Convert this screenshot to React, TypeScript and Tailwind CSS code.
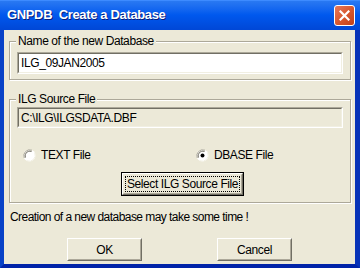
// Windows XP style "Create a Database" dialog

const font = "font-['Liberation_Sans',Arial,sans-serif]";

function Sunken({ children, className = "" }: { children: React.ReactNode; className?: string }) {
  // classic 3D sunken edit border
  return (
    <div className={`border border-t-[#ACA899] border-l-[#ACA899] border-b-white border-r-white ${className}`}>
      <div className="h-full border border-t-[#716F64] border-l-[#716F64] border-b-[#F1EFE2] border-r-[#F1EFE2] flex items-center">
        {children}
      </div>
    </div>
  );
}

function Button({ label, focused = false, className = "" }: { label: string; focused?: boolean; className?: string }) {
  return (
    <div className={`${focused ? "border border-black" : ""} ${className}`}>
      <div className="h-full border border-t-white border-l-white border-b-[#716F64] border-r-[#716F64] bg-[#ECE9D8]">
        <div className="h-full border border-t-[#ECE9D8] border-l-[#ECE9D8] border-b-[#ACA899] border-r-[#ACA899] flex items-center justify-center p-[2px]">
          <span
            className={`whitespace-nowrap px-[1px] leading-[14px] text-[12px] tracking-[-0.4px] text-black ${focused ? "outline outline-1 outline-dotted outline-black" : ""}`}
          >
            {label}
          </span>
        </div>
      </div>
    </div>
  );
}

function Radio({ checked, label }: { checked: boolean; label: string }) {
  return (
    <div className="flex items-center gap-[5px]">
      <svg width="13" height="13" viewBox="0 0 13 13">
        <circle cx="6.5" cy="6.5" r="6" fill="#fff" />
        <path d="M1.2 9 A6 6 0 0 1 9 1.2" fill="none" stroke="#ACA899" strokeWidth="1" />
        <path d="M2.4 8.6 A4.8 4.8 0 0 1 8.6 2.4" fill="none" stroke="#716F64" strokeWidth="1" />
        <path d="M11.8 4 A6 6 0 0 1 4 11.8" fill="none" stroke="#F1EFE2" strokeWidth="1" />
        {checked && <circle cx="6.5" cy="6.5" r="2" fill="#000" />}
      </svg>
      <span className="text-[12px] tracking-[-0.4px] text-black leading-[14px]">{label}</span>
    </div>
  );
}

function Group({ label, children, className = "" }: { label: string; children: React.ReactNode; className?: string }) {
  return (
    <div
      className={`relative border border-[#ACA899] shadow-[inset_1px_1px_0_#fff,1px_1px_0_#fff] ${className}`}
    >
      <span className="absolute left-[6px] top-[-8px] bg-[#ECE9D8] px-[2px] text-[12px] tracking-[-0.4px] leading-[14px] text-black">
        {label}
      </span>
      {children}
    </div>
  );
}

export default function App() {
  return (
    <div className={`w-[360px] h-[268px] flex flex-col ${font}`}>
      {/* Title bar */}
      <div className="h-[30px] flex items-center justify-between pl-[7px] pr-[5px] bg-gradient-to-b from-[#2C7BF2] via-[#0058EE] to-[#0047D6] shadow-[inset_0_1px_0_#3D8BFF]">
        <span className="text-white font-bold text-[13px] tracking-[-0.35px] [text-shadow:1px_1px_0_#0A1E7A]">
          GNPDB&nbsp; Create a Database
        </span>
        <div className="w-[21px] h-[21px] rounded-[3px] border border-white bg-gradient-to-br from-[#E6785A] via-[#D8582F] to-[#C0401A] flex items-center justify-center">
          <svg width="11" height="11" viewBox="0 0 11 11">
            <path d="M1.5 1.5 L9.5 9.5 M9.5 1.5 L1.5 9.5" stroke="#fff" strokeWidth="2.2" strokeLinecap="square" />
          </svg>
        </div>
      </div>

      {/* Body */}
      <div className="flex-1 bg-[#ECE9D8] border-l-[4px] border-r-[5px] border-b-[4px] border-l-[#0842C7] border-r-[#0733B8] border-b-[#0023A8] flex flex-col pl-[5px] pr-[4px]">
        <Group label="Name of the new Database" className="mt-[11px] h-[39px] pt-[10px] px-[7px]">
          <Sunken className="h-[22px] bg-white">
            <span className="pl-[2px] text-[12px] tracking-[-0.4px] text-black">ILG_09JAN2005</span>
          </Sunken>
        </Group>

        <Group label="ILG Source File" className="mt-[19px] h-[104px] pt-[7px] px-[7px]">
          <Sunken className="h-[21px]">
            <span className="pl-[2px] text-[12px] tracking-[-0.4px] text-black">C:\ILG\ILGSDATA.DBF</span>
          </Sunken>
          <div className="flex mt-[20px] pl-[6px]">
            <div className="w-[173px]">
              <Radio checked={false} label="TEXT File" />
            </div>
            <Radio checked={true} label="DBASE File" />
          </div>
          <div className="flex mt-[10px] pl-[104px]">
            <Button label="Select ILG Source File" focused className="w-[123px] h-[24px]" />
          </div>
        </Group>

        <p className="mt-[7px] pl-[1px] text-[12px] tracking-[-0.55px] leading-[14px] text-black">
          Creation of a new database may take some time !
        </p>

        <div className="flex mt-[14px] pl-[58px] gap-[75px]">
          <Button label="OK" className="w-[75px] h-[23px]" />
          <Button label="Cancel" className="w-[75px] h-[23px]" />
        </div>
      </div>
    </div>
  );
}
